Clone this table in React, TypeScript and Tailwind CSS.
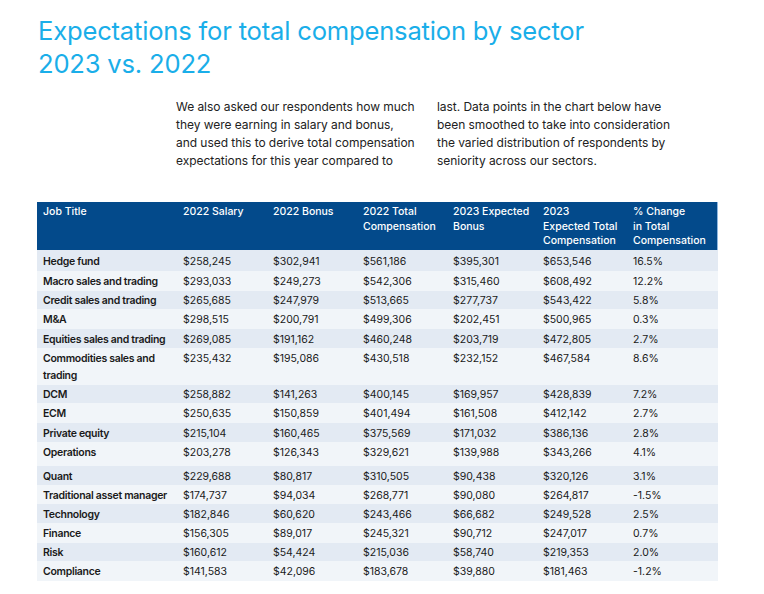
import React from "react";

type Row = { t: string[]; v: string[]; h: string; bg: string };

const dark = "bg-[#e3eaf3]";
const light = "bg-[#f1f5f9]";

const rows: Row[] = [
  { t: ["Hedge fund"], v: ["$258,245", "$302,941", "$561,186", "$395,301", "$653,546", "16.5%"], h: "h-[21px] pt-[3px]", bg: dark },
  { t: ["Macro sales and trading"], v: ["$293,033", "$249,273", "$542,306", "$315,460", "$608,492", "12.2%"], h: "h-[20px] pt-[2px]", bg: light },
  { t: ["Credit sales and trading"], v: ["$265,685", "$247,979", "$513,665", "$277,737", "$543,422", "5.8%"], h: "h-[18px] pt-[1px]", bg: dark },
  { t: ["M&A"], v: ["$298,515", "$200,791", "$499,306", "$202,451", "$500,965", "0.3%"], h: "h-[20px] pt-[2px]", bg: light },
  { t: ["Equities sales and trading"], v: ["$269,085", "$191,162", "$460,248", "$203,719", "$472,805", "2.7%"], h: "h-[19px] pt-[2px]", bg: dark },
  { t: ["Commodities sales and", "trading"], v: ["$235,432", "$195,086", "$430,518", "$232,152", "$467,584", "8.6%"], h: "h-[37px] pt-[2px]", bg: light },
  { t: ["DCM"], v: ["$258,882", "$141,263", "$400,145", "$169,957", "$428,839", "7.2%"], h: "h-[18px] pt-[1px]", bg: dark },
  { t: ["ECM"], v: ["$250,635", "$150,859", "$401,494", "$161,508", "$412,142", "2.7%"], h: "h-[20px] pt-[2px]", bg: light },
  { t: ["Private equity"], v: ["$215,104", "$160,465", "$375,569", "$171,032", "$386,136", "2.8%"], h: "h-[19px] pt-[2px]", bg: dark },
  { t: ["Operations"], v: ["$203,278", "$126,343", "$329,621", "$139,988", "$343,266", "4.1%"], h: "h-[24px] pt-[2px]", bg: light },
  { t: ["Quant"], v: ["$229,688", "$80,817", "$310,505", "$90,438", "$320,126", "3.1%"], h: "h-[19px] pt-[2px]", bg: dark },
  { t: ["Traditional asset manager"], v: ["$174,737", "$94,034", "$268,771", "$90,080", "$264,817", "-1.5%"], h: "h-[19px] pt-[2px]", bg: light },
  { t: ["Technology"], v: ["$182,846", "$60,620", "$243,466", "$66,682", "$249,528", "2.5%"], h: "h-[19px] pt-[2px]", bg: dark },
  { t: ["Finance"], v: ["$156,305", "$89,017", "$245,321", "$90,712", "$247,017", "0.7%"], h: "h-[20px] pt-[2px]", bg: light },
  { t: ["Risk"], v: ["$160,612", "$54,424", "$215,036", "$58,740", "$219,353", "2.0%"], h: "h-[18px] pt-[1px]", bg: dark },
  { t: ["Compliance"], v: ["$141,583", "$42,096", "$183,678", "$39,880", "$181,463", "-1.2%"], h: "h-[20px] pt-[2px]", bg: light },
];

const headers: string[][] = [
  ["Job Title"],
  ["2022 Salary"],
  ["2022 Bonus"],
  ["2022 Total", "Compensation"],
  ["2023 Expected", "Bonus"],
  ["2023", "Expected Total", "Compensation"],
  ["% Change", "in Total", "Compensation"],
];

const grid = "grid grid-cols-[140px_90px_90px_90px_90px_90px_91px]";

export default function App() {
  return (
    <div
      className="w-[764px] h-[594px] bg-white overflow-hidden"
      style={{ fontFamily: "Inter, 'Liberation Sans', sans-serif" }}
    >
      <h1 className="pt-[14px] pl-[38px] text-[25.6px] leading-[33px] font-normal text-[#1aaee9] tracking-[-0.2px]">
        Expectations for total compensation by sector
        <br />
        2023 vs. 2022
      </h1>
      <div className="mt-[18px] ml-[176px] flex gap-[21px] text-[12px] leading-[18px] text-[#222] tracking-[-0.05px]">
        <p className="w-[240px]">
          We also asked our respondents how much they were earning in salary and bonus, and used this to derive total compensation expectations for this year compared to
        </p>
        <p className="w-[250px]">
          last. Data points in the chart below have been smoothed to take into consideration the varied distribution of respondents by seniority across our sectors.
        </p>
      </div>
      <div className="mt-[32px] ml-[37px] w-[681px] text-[10.5px]">
        <div className={`${grid} h-[48px] bg-[#034a8b] text-white border-r border-[#8fb7e0] pt-[3px] leading-[14.5px] font-medium`}>
          {headers.map((h, i) => (
            <div key={i} className="pl-[6px]">
              {h.map((l, j) => (
                <div key={j}>{l}</div>
              ))}
            </div>
          ))}
        </div>
        {rows.map((r, i) => (
          <div key={i} className={`${grid} ${r.h} ${r.bg} leading-[17px] text-[#1a1a1a]`}>
            <div className="pl-[6px] font-semibold tracking-[-0.3px]">
              {r.t.map((l, j) => (
                <div key={j}>{l}</div>
              ))}
            </div>
            {r.v.map((v, j) => (
              <div key={j} className="pl-[6px]">
                {v}
              </div>
            ))}
          </div>
        ))}
      </div>
    </div>
  );
}
